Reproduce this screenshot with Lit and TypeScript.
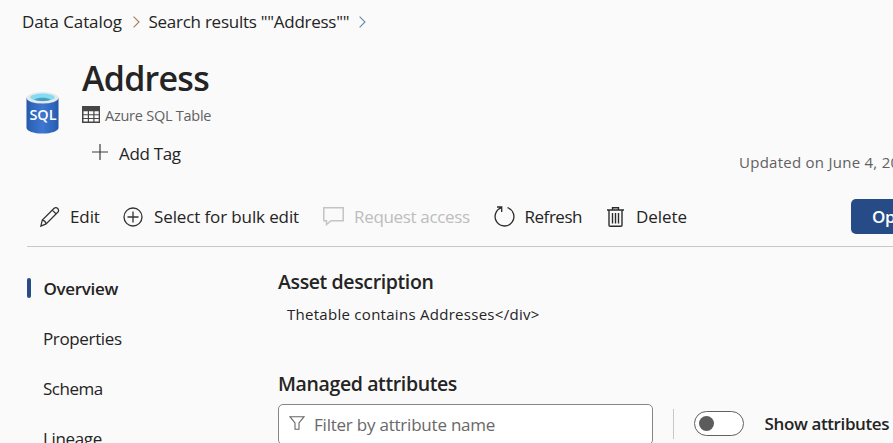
import { LitElement, html, css } from "lit";

const ICONS = {
  database: html`<svg width="33" height="43" viewBox="0 0 34 44" preserveAspectRatio="none">
    <defs><linearGradient id="db" x1="0" x2="1"><stop offset="0" stop-color="#2458a8"/><stop offset=".15" stop-color="#2d66bb"/><stop offset=".5" stop-color="#3f76cf"/><stop offset=".85" stop-color="#2d66bb"/><stop offset="1" stop-color="#2458a8"/></linearGradient></defs>
    <path d="M.5 7v30.500c0 3.300 7.400 6 16.500 6s16.500-2.700 16.500-6V7z" fill="url(#db)"/>
    <ellipse cx="17" cy="7" rx="16.500" ry="5.900" fill="#e8e8e8"/>
    <ellipse cx="17" cy="6.500" rx="12.700" ry="3.900" fill="#83dcf5"/>
    <path d="M8.500 8.900c2-1.500 5-2.100 8.500-2.100s6.500.6 8.500 2.100c-2.200.9-5.200 1.400-8.500 1.400s-6.300-.5-8.500-1.400z" fill="#4a9fc0"/>
    <text x="17.500" y="30" text-anchor="middle" class="sql" textLength="28" lengthAdjust="spacingAndGlyphs">SQL</text></svg>`,
  table: html`<svg width="18" height="17" viewBox="0 0 18 17"><path d="M0 0h18v17H0z" fill="#464646"/><path d="M1.500 5.200h4.300v3H1.500zM7 5.200h4.300v3H7zM12.500 5.200h4.200v3h-4.200zM1.500 9.200h4.300v2.900H1.500zM7 9.200h4.300v2.900H7zM12.500 9.200h4.200v2.900h-4.200zM1.500 13.100h4.300v2.500H1.500zM7 13.100h4.300v2.500H7zM12.500 13.100h4.200v2.500h-4.200z" fill="#fafafa"/></svg>`,
  plus: html`<svg width="16" height="16" viewBox="0 0 16 16"><path d="M8 0v16M0 8h16" stroke="#3c3c3c" stroke-width="1.200"/></svg>`,
  edit: html`<svg width="20" height="20" viewBox="0 0 21 21" fill="none" stroke="#333" stroke-width="1.300"><path d="M.9 20.100l1.500-6.300L14.600 1.600c1.200-1.200 2.900-1.200 4 0s1.100 2.700 0 3.900L6.400 17.700zM12.900 3.300l4.200 4M2.400 13.800c2.100.3 3.600 1.800 4 3.900"/></svg>`,
  add: html`<svg width="20" height="20" viewBox="0 0 20 20" fill="none" stroke="#333" stroke-width="1.300"><circle cx="10" cy="10" r="9"/><path d="M10 4.500v11M4.500 10h11"/></svg>`,
  comment: html`<svg width="21" height="19" viewBox="0 0 21 19" fill="none" stroke="#c4c4c4" stroke-width="1.500"><path d="M.8.8h19.400v12.900H8L3.500 17.500v-3.800H.8z"/></svg>`,
  refresh: html`<svg width="21" height="21" viewBox="0 0 21 21" fill="none" stroke="#2c2c2c" stroke-width="1.300"><path d="M13.500 1.700a9.400 9.400 0 1 1-6 0M3 1h4.700v5"/></svg>`,
  trash: html`<svg width="17" height="20" viewBox="0 0 17 20" fill="none" stroke="#2c2c2c" stroke-width="1.400"><path d="M0 3h17M5.500 3V.8h6V3M2 3v15.200q0 1.100 1.100 1.100h10.800q1.100 0 1.100-1.100V3M5.500 6v10.500M8.500 6v10.500M11.500 6v10.500"/></svg>`,
  filter: html`<svg width="16" height="14" viewBox="0 0 16 14" fill="none" stroke="#666" stroke-width="1.100"><path d="M.9.700h14.200L10 6.900v6.300H6V6.900z"/></svg>`,
};

const chevron = (color: string) =>
  html`<svg class="chevron" width="7" height="12" viewBox="0 0 7 12" fill="none" stroke=${color} stroke-width="1.100"><path d="M.6.700l5.400 5.300-5.400 5.300"/></svg>`;

class AppRoot extends LitElement {
  static styles = css`
    :host { display: block; width: 100%; height: 443px; overflow: hidden; background: #fafafa; color: #242424; font: 17px/24px "Open Sans", "Noto Sans", sans-serif; white-space: nowrap; }
    * { box-sizing: border-box; }
    svg { display: block; flex: none; }
    .crumbs { display: flex; align-items: center; height: 43px; padding-left: 22px; }
    .crumbs .chevron { margin: 1px 9px 0 10px; }
    .data { width: 100.500px; letter-spacing: -.1px; }
    .search { width: 200px; letter-spacing: -.26px; }
    .header { display: flex; height: 148px; padding: 12px 0 0 26px; }
    .asset-icon { width: 34px; margin: 36px 22px 0 0; }
    .sql { font: 600 14.500px "Open Sans", sans-serif; fill: #fff; }
    .title { margin: 0; height: 46px; font-size: 34px; font-weight: 600; line-height: 46px; letter-spacing: -.75px; }
    .kind { display: flex; align-items: center; gap: 5px; height: 28px; color: #616161; font-size: 14.500px; letter-spacing: -.25px; }
    .kind svg { margin-top: -1px; }
    .kind span { margin-top: 1px; }
    .tag { display: flex; align-items: center; gap: 11px; height: 24px; margin-top: 12px; padding-left: 10px; letter-spacing: -.33px; }
    .tag svg { margin-top: -3px; }
    .tag span { margin-top: 1px; }
    .updated { flex: none; width: 154px; margin-left: auto; padding-top: 95px; color: #616161; font-size: 15px; letter-spacing: .26px; }
    .toolbar { display: flex; height: 56px; margin-left: 27px; padding-left: 12px; border-bottom: 1px solid #c8c8c8; }
    .action { display: flex; align-items: center; height: 51px; }
    .edit { width: 84px; gap: 10px; padding-left: 1px; letter-spacing: -.1px; }
    .bulk { width: 200px; gap: 11px; letter-spacing: -.12px; }
    .request { width: 171px; gap: 10px; color: #bdbdbd; letter-spacing: -.33px; }
    .refresh { width: 113px; gap: 9.500px; letter-spacing: -.46px; }
    .delete { gap: 12px; letter-spacing: -.04px; }
    .open { width: 42px; height: 35px; margin: 8px 0 0 auto; padding: 6px 0 0 21px; border-radius: 5px 0 0 5px; background: #274b86; color: #fff; font-weight: 600; letter-spacing: -.3px; overflow: hidden; }
    .body { display: flex; height: 196px; }
    .nav { width: 278px; padding: 17px 0 0 27px; }
    .item { display: flex; align-items: center; height: 50px; padding-left: 16px; letter-spacing: -.36px; }
    .item.active { padding-left: 0; gap: 12.500px; font-weight: 600; letter-spacing: -.33px; }
    .bar { width: 4px; height: 20px; margin-top: -3px; border-radius: 2px; background: #274b86; }
    .item.schema { letter-spacing: -.48px; }
    .content { flex: 1; min-width: 0; padding-top: 21px; }
    .heading { margin: 0; height: 28px; font-size: 19.500px; font-weight: 600; line-height: 28px; letter-spacing: -.38px; }
    .desc { height: 24px; margin: 6px 0 44px 9px; font-size: 15px; letter-spacing: .28px; }
    .controls { display: flex; margin-top: 6px; }
    .field { display: flex; align-items: center; gap: 9px; width: 375px; height: 41px; padding-left: 10px; border: 1px solid #868686; border-radius: 5px; background: #fff; color: #686868; letter-spacing: -.22px; }
    .field svg { margin-top: -3px; }
    .divider { width: 1px; height: 30px; margin: 5px 20px 0; background: #c8c8c8; }
    .toggle { width: 50px; height: 25px; margin-top: 7px; padding: 4px; border: 1px solid #616161; border-radius: 13px; background: #fff; }
    .knob { width: 15px; height: 15px; border-radius: 50%; background: #5c5c5c; }
    .show { margin: 8px 0 0 20.500px; font-weight: 600; letter-spacing: -.38px; }
  `;
  render() {
    return html`
      <nav class="crumbs"><span class="data">Data Catalog</span>${chevron("#b07a4a")}<span class="search">Search results ""Address""</span>${chevron("#6389a8")}</nav>
      <header class="header">
        <div class="asset-icon">${ICONS.database}</div>
        <div>
          <h1 class="title">Address</h1>
          <div class="kind">${ICONS.table}<span>Azure SQL Table</span></div>
          <div class="tag">${ICONS.plus}<span>Add Tag</span></div>
        </div>
        <div class="updated">Updated on June 4, 2024</div>
      </header>
      <div class="toolbar">
        <div class="action edit">${ICONS.edit}<span>Edit</span></div>
        <div class="action bulk">${ICONS.add}<span>Select for bulk edit</span></div>
        <div class="action request">${ICONS.comment}<span>Request access</span></div>
        <div class="action refresh">${ICONS.refresh}<span>Refresh</span></div>
        <div class="action delete">${ICONS.trash}<span>Delete</span></div>
        <div class="open">Open</div>
      </div>
      <div class="body">
        <nav class="nav">
          <div class="item active"><span class="bar"></span><span>Overview</span></div>
          <div class="item">Properties</div>
          <div class="item schema">Schema</div>
          <div class="item">Lineage</div>
        </nav>
        <main class="content">
          <h2 class="heading">Asset description</h2>
          <div class="desc">Thetable contains Addresses&lt;/div&gt;</div>
          <h2 class="heading">Managed attributes</h2>
          <div class="controls">
            <div class="field">${ICONS.filter}<span>Filter by attribute name</span></div>
            <span class="divider"></span>
            <div class="toggle"><div class="knob"></div></div>
            <span class="show">Show attributes</span>
          </div>
        </main>
      </div>`;
  }
}
customElements.define("app-root", AppRoot);
